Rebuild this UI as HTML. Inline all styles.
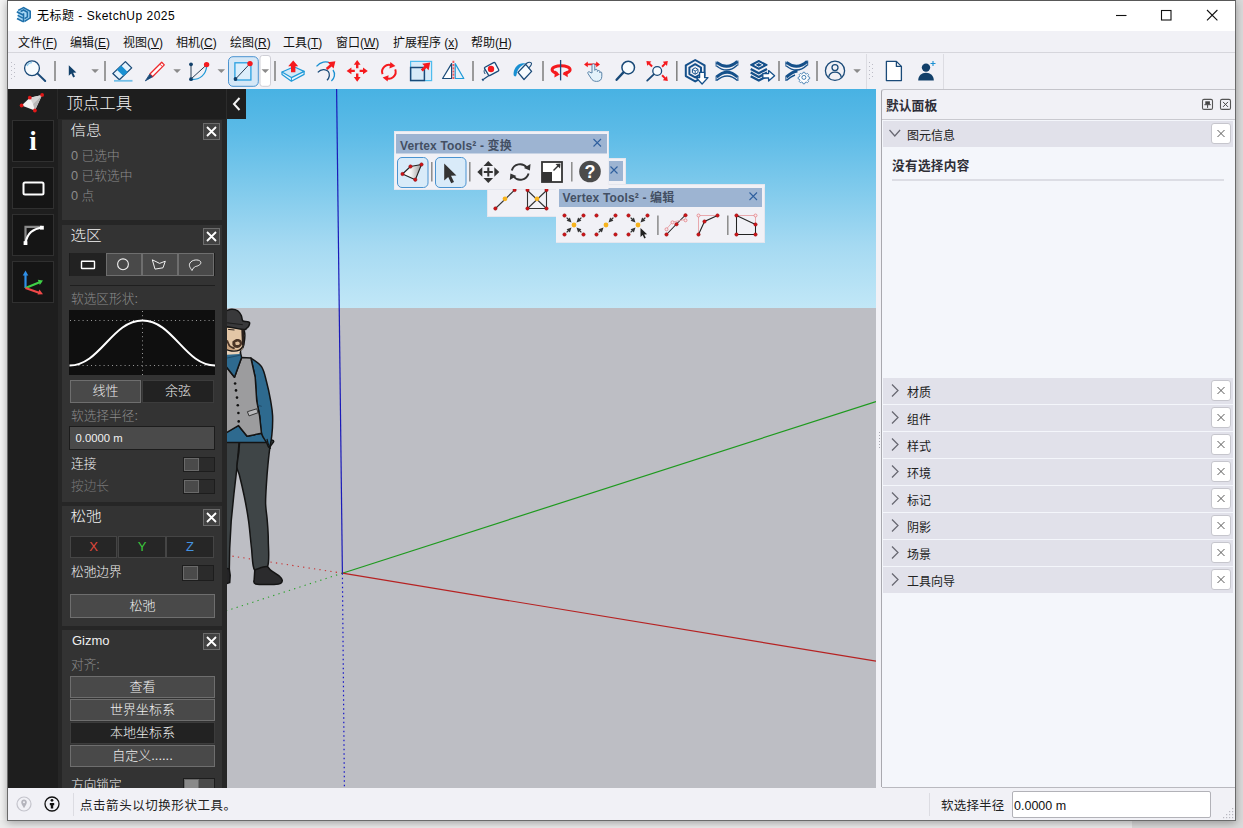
<!DOCTYPE html>
<html lang="zh-CN">
<head>
<meta charset="utf-8">
<title>无标题 - SketchUp 2025</title>
<style>
*{box-sizing:border-box;margin:0;padding:0}
html,body{width:1243px;height:828px;overflow:hidden}
body{position:relative;background:#e9e9e9;font-family:"Liberation Sans","Noto Sans CJK SC",sans-serif;font-size:12px;color:#000}
.abs{position:absolute}
svg{position:absolute;left:0;top:0;overflow:visible}
#shadowL{left:0;top:0;width:8px;height:828px;background:#f3f3f3}
#shadowR{left:1235px;top:0;width:8px;height:828px;background:#dadada}
#shadowB{left:0;top:820px;width:1243px;height:8px;background:#ececec}
#shadowB2{left:1132px;top:820px;width:111px;height:8px;background:#dadada}
#win{left:7px;top:0;width:1229px;height:821px;background:#f1f1f6;border:1px solid #6a6a6a;border-top-color:#585858;box-shadow:0 2px 8px rgba(0,0,0,.32)}
#inner{left:-8px;top:-1px;width:1243px;height:828px}
#titlebar{left:8px;top:1px;width:1227px;height:30px;background:#fff}
#title{left:37px;top:8px;font-size:12px;line-height:16px;white-space:nowrap;letter-spacing:.5px}
#menubar{left:8px;top:31px;width:1227px;height:21px;background:#f1f1f6}
.mi{top:35px;font-size:12px;line-height:16px;white-space:nowrap;color:#111}
.mi u{text-decoration:underline;text-underline-offset:1px}
#tbline{left:8px;top:52px;width:1227px;height:1px;background:#d6d6dc}
#toolbar{left:8px;top:53px;width:1227px;height:36px;background:#f1f1f6}

/* left dark panel */
#leftpanel{left:8px;top:89px;width:219px;height:699px;background:#1e1e1e;overflow:hidden}
#lpgutter{left:58px;top:119px;width:169px;height:669px;background:#262626}
#lpcollapse{left:227px;top:89px;width:19px;height:30px;background:#1e1e1e;z-index:3}
#lpicons{z-index:4}
.lbtn{left:12px;width:42px;height:42px;background:#151515;border:1px solid #303030}
.sec{left:62px;width:160px;background:#333}
.dk{font-family:"Liberation Sans","Noto Sans CJK SC",sans-serif;font-weight:300;white-space:nowrap}
.sectitle{left:70.500px;font-size:15.600px;line-height:20px;color:#f4f4f4;font-weight:300;transform:scaleY(.9);transform-origin:50% 55%}
.secx{left:202.500px;width:17px;height:17px;background:#424242;border:1px solid #6c6c6c}
.dim{color:#8c8c8c}
.lbl{left:71px;font-size:12.700px;line-height:16px;font-weight:300}
.dbtn{font-size:13px;line-height:16px;color:#f0f0f0;text-align:center;font-weight:300}
.btnA{background:#494949;border:1px solid #6e6e6e}
.btnB{background:#222;border:1px solid #3c3c3c}
.tog{width:32px;height:15.500px;background:#2b2b2b;border:1px solid #1d1d1d}
.tog i{position:absolute;left:0;top:0;width:15px;height:13.500px;background:#4a4a4a;border:1px solid #6a6a6a;display:block}

/* right panel */
#rp{left:881px;top:89px;width:354px;height:698px;background:#f1f1f6;border:1px solid #a9a9af;border-top-color:#c4c4ca;border-right:none;border-radius:3px 0 0 0}
#rphead{left:886px;top:97px;font-size:12.8px;font-weight:bold;line-height:17px;color:#2e2e38}
.row{left:883px;width:350px;height:26px;background:#e1e1ea}
.rowt{left:907px;font-size:12px;line-height:16px;color:#222}
.rowx{left:1210.500px;width:20px;height:20.500px;background:#fff;border:1px solid #c6c6cd;border-radius:3px}

/* floating toolbars */
.ft{background:#f1f1f6;border:1px solid #e4e6ee}
.fthead{background:#9db4d2}
.fttitle{font-weight:bold;font-size:12px;line-height:16px;color:#434f63;white-space:nowrap;letter-spacing:.15px}

#statusbar{left:8px;top:788px;width:1227px;height:32px;background:#f1f1f6}
</style>
</head>
<body>
<div id="shadowL" class="abs"></div>
<div id="shadowR" class="abs"></div>
<div id="shadowB" class="abs"></div>
<div id="shadowB2" class="abs"></div>
<div id="win" class="abs"><div id="inner" class="abs">

<div id="titlebar" class="abs"></div>
<div id="title" class="abs">无标题 - SketchUp 2025</div>

<div id="menubar" class="abs"></div>
<div class="abs mi" style="left:18px">文件(<u>F</u>)</div>
<div class="abs mi" style="left:70px">编辑(<u>E</u>)</div>
<div class="abs mi" style="left:123px">视图(<u>V</u>)</div>
<div class="abs mi" style="left:176px">相机(<u>C</u>)</div>
<div class="abs mi" style="left:230px">绘图(<u>R</u>)</div>
<div class="abs mi" style="left:283px">工具(<u>T</u>)</div>
<div class="abs mi" style="left:336px">窗口(<u>W</u>)</div>
<div class="abs mi" style="left:393px">扩展程序 (<u>x</u>)</div>
<div class="abs mi" style="left:471px">帮助(<u>H</u>)</div>
<div id="tbline" class="abs"></div>
<div id="toolbar" class="abs"></div>
<svg id="tbicons" width="1243" height="100" viewBox="0 0 1243 100">
<defs>
<g id="sep"><line x1="0" y1="61" x2="0" y2="81" stroke="#858585" stroke-width="1.6"/></g>
<g id="dd"><path d="M0 0h7.6l-3.8 3.9z" fill="#8a8a8a"/></g>
</defs>
<!-- SketchUp logo -->
<g>
<path d="M17.600 10.400l6-3.200 7 3.800v7.200l-6.800 4.200-6.600-3.600 1-1.600-1.200-1.600 1.200-1.400-1-1.800z" fill="#a9d8f5"/>
<g fill="none" stroke="#1f6fa9" stroke-width="1.600" stroke-linejoin="miter">
<path d="M18.200 10.400l5.400-2.800 6.600 3.700v6.600l-5.600 3.500"/>
<path d="M20.600 11.500l3-1.500 3.800 2.200v4.600l-2.800 1.800"/>
<path d="M23.500 13.200v9"/>
<path d="M16.800 11.700l6.200 3.300"/>
<path d="M17.800 15.400l5 2.700"/>
<path d="M17 18.500l6 3.100"/>
</g>
</g>
<!-- window controls -->
<path d="M1116 15.5h10.5" stroke="#111" stroke-width="1.1" fill="none"/>
<rect x="1161.5" y="10.5" width="9.5" height="9.5" fill="none" stroke="#111" stroke-width="1.1"/>
<path d="M1207 10l10.4 10.4M1217.4 10l-10.4 10.4" stroke="#111" stroke-width="1.1" fill="none"/>

<!-- gripper 1 -->
<g fill="#bcbcc6">
<rect x="11" y="62" width="1" height="1"/><rect x="11" y="66" width="1" height="1"/><rect x="11" y="70" width="1" height="1"/><rect x="11" y="74" width="1" height="1"/><rect x="11" y="78" width="1" height="1"/>
<rect x="14" y="64" width="1" height="1"/><rect x="14" y="68" width="1" height="1"/><rect x="14" y="72" width="1" height="1"/><rect x="14" y="76" width="1" height="1"/>
</g>
<!-- search -->
<circle cx="32" cy="68.2" r="7.4" fill="#f7fbfe" stroke="#1a4a78" stroke-width="1.3"/>
<path d="M27 66a5.4 5.4 0 0 1 5-3.4" stroke="#8fcbee" stroke-width="1.4" fill="none"/>
<path d="M37.6 73.6l7.6 7.4" stroke="#1a4a78" stroke-width="2" stroke-linecap="round"/>
<use href="#sep" x="55"/>
<!-- select arrow -->
<path d="M68.8 65.2v10.6l2.5-2.3 1.9 4 1.8-.9-1.9-3.9 3.3-.2z" fill="#12406a"/>
<use href="#dd" x="91.3" y="69.2"/>
<use href="#sep" x="105"/>
<!-- eraser -->
<path d="M125.400 61.600l6.300 6.300-12.300 11.800-6.600-6.100z" fill="#e6f3fc" stroke="#1a4a78" stroke-width="1.300" stroke-linejoin="round"/>
<path d="M121.200 65.600l6.500 6.300-4.300 4.100-6.600-6.200z" fill="#1a90d2"/>
<path d="M114 80.800h18.500" stroke="#72bee7" stroke-width="1.800"/>
<!-- pencil -->
<path d="M161.700 62.300l2.600 2.600-11.800 11.800-2.600-2.700z" fill="#fff" stroke="#ee2a2e" stroke-width="1.300" stroke-linejoin="round"/>
<path d="M159.900 64.200l2.600 2.600" stroke="#ee2a2e" stroke-width="1"/>
<path d="M149.700 74.200l2.600 2.700-7 4z" fill="#1a4a78" stroke="#1a4a78" stroke-width=".8" stroke-linejoin="round"/>
<use href="#dd" x="173.300" y="69.200"/>
<!-- arc -->
<path d="M191 64.500v14.500" stroke="#2a3f55" stroke-width="1"/>
<path d="M191 79l15.400-14" stroke="#2a3f55" stroke-width="1"/>
<path d="M191.500 79.500c8.500.300 14.500-4.800 15.200-13.500" stroke="#1f9ad8" stroke-width="1.300" fill="none"/>
<circle cx="191" cy="64.300" r="1.900" fill="#12406a"/><circle cx="191" cy="79.200" r="1.900" fill="#12406a"/>
<circle cx="206.600" cy="64.600" r="2.700" fill="#f51a1e"/>
<use href="#dd" x="217.500" y="69.200"/>
<!-- rectangle (selected) -->
<rect x="228.500" y="56.700" width="29.800" height="29.600" rx="4.500" fill="#d5e7f6" stroke="#4a93d0" stroke-width="1"/>
<rect x="234.900" y="62.800" width="16" height="17.200" fill="#dceefb" stroke="#29a0e0" stroke-width="1.300"/>
<path d="M235.600 79l14.400-15.400" stroke="#2a3f55" stroke-width="1"/>
<circle cx="235.500" cy="79" r="1.900" fill="#12406a"/><circle cx="250" cy="63.600" r="2.700" fill="#f51a1e"/>
<rect x="260" y="55.500" width="10.500" height="30.800" rx="2.500" fill="#fff" stroke="#cfcfd6" stroke-width="1"/>
<use href="#dd" x="261.500" y="69.200"/>
<use href="#sep" x="275"/>
<!-- push/pull -->
<path d="M282 72v2.600l9.400 6.600 12.700-6.800v-3z" fill="#e8f4fc" stroke="#1f9ad8" stroke-width="1.200" stroke-linejoin="round"/>
<path d="M282 72l12-5.200 10.100 4.600-12.700 6.200z" fill="#d2e9f8" stroke="#1f9ad8" stroke-width="1.200" stroke-linejoin="round"/>
<path d="M291.400 77.600v3.600" stroke="#1f9ad8" stroke-width="1"/>
<path d="M293.200 60.600l5 5.600h-2.800v6h-4.400v-6h-2.800z" fill="#f51a1e"/>
<!-- follow me -->
<path d="M316.5 66.4c4-4.6 9.6-5.6 13.6-3.4" stroke="#1a90d2" stroke-width="1.3" fill="none"/>
<path d="M333 70c2.6 3.6 1.6 8.4-1.6 11" stroke="#1a90d2" stroke-width="1.3" fill="none"/>
<path d="M317.8 72.4c3.4-3.6 8-3.6 10.4-1 2 2.600 1.400 6.400-1.200 8.800" stroke="#1a4a78" stroke-width="1.3" fill="none"/>
<path d="M335.4 61.200l-1.800 7.400-2-2.200-4 3.600-1.800-2 4-3.600-2-2.100z" fill="#f51a1e"/>
<!-- move -->
<g fill="#f51a1e">
<path d="M357.200 60l3.400 4.800h-2.200v3.400h-2.400v-3.400h-2.200z"/>
<path d="M357.200 81.800l3.400-4.800h-2.200v-3.400h-2.400v3.400h-2.200z"/>
<path d="M346.600 70.900l4.800-3.400v2.200h3.400v2.400h-3.400v2.200z"/>
<path d="M367.800 70.900l-4.800-3.400v2.200h-3.400v2.400h3.400v2.200z"/>
</g>
<!-- rotate -->
<g fill="none" stroke="#f51a1e" stroke-width="2">
<path d="M382.600 74.200a6.800 6.800 0 0 1 9.400-8.600"/>
<path d="M395.200 69.400a6.800 6.800 0 0 1-9.600 8.400"/>
</g>
<path d="M390.400 62l5 4-6 2.400z" fill="#f51a1e"/>
<path d="M387.600 81.600l-5-4.200 6-2.200z" fill="#f51a1e"/>
<!-- scale -->
<rect x="410.600" y="61.400" width="21" height="19.200" fill="#d7ebf9" stroke="#4fbcee" stroke-width="1.200"/>
<path d="M410.600 67.400h13.800v13.200h-13.800z" fill="none" stroke="#1a4a78" stroke-width="1.500"/>
<path d="M430.200 62.400l-1.600 7.800-2.200-2.200-3.600 3.600-2-2 3.600-3.600-2.200-2.200z" fill="#f51a1e"/>
<!-- flip -->
<path d="M451.600 63.600v14.900h-9z" fill="#fff" stroke="#1a4a78" stroke-width="1.200" stroke-linejoin="round"/>
<path d="M455.200 63.600v14.900h8.600z" fill="#e4f2fb" stroke="#1f9ad8" stroke-width="1.200" stroke-linejoin="round"/>
<path d="M453.400 60.800v19" stroke="#ee5a5e" stroke-width="1.900" stroke-dasharray="2.200 1"/>
<use href="#sep" x="473"/>
<!-- tape measure -->
<path d="M485 67.200l8.600-4.600q1-.500 1.600.500l3.400 6.400q.500 1-.500 1.600l-8 4.200q-1 .500-1.700-.400l-3.800-6.200q-.500-1 .400-1.500z" fill="#f7fbfe" stroke="#1a4a78" stroke-width="1.300" stroke-linejoin="round"/>
<circle cx="491" cy="69" r="3.200" fill="#f51a1e"/>
<path d="M484.600 69.600c-.800 1.400-.600 3 .600 4.400" fill="none" stroke="#1a4a78" stroke-width="1"/>
<path d="M489 75.400l-6.200 4.400M482 78.800l1.400 2" fill="none" stroke="#1a4a78" stroke-width="1.200"/>
<!-- paint bucket -->
<path d="M518 72.400l7.700-8.100 5.900 7.100-7.600 8.100z" fill="#f7fbfe" stroke="#1a4a78" stroke-width="1.300" stroke-linejoin="round"/>
<path d="M525 65c1.600-2.400 4.400-3.400 6-2.400 1.400 1-.200 3.800-2.600 5.400" fill="none" stroke="#1a4a78" stroke-width="1.100"/>
<path d="M525.400 63.600c-5.400-1.800-10.800 2.600-11.800 9.200-.300 2.200.300 3.600 1.500 3.600 1 0 1.400-1 1.700-2.600.800-4.400 3.800-8 8.600-10.200z" fill="#1a90d2"/>
<use href="#sep" x="543"/>
<!-- orbit -->
<ellipse cx="561.100" cy="69.800" rx="9" ry="4" fill="none" stroke="#f51a1e" stroke-width="3"/>
<rect x="557.600" y="71" width="6" height="6" fill="#f1f1f6"/>
<path d="M555 70.600l4.800 4-5.400 2.800z" fill="#f51a1e"/>
<path d="M567.400 70.400l-4.800 3.600 5.200 3.200z" fill="#f51a1e"/>
<path d="M560.600 60v20.400" stroke="#1a4a78" stroke-width="1.300"/>
<!-- pan -->
<path d="M584 64.400l3.800-2.800v1.900h8.400v-1.900l3.800 2.800-3.800 2.800v-1.900h-8.400v1.900z" fill="#f51a1e"/>
<path d="M592 73v-7.600c0-2 2.800-2 2.800 0v5c.2-1.500 2.600-1.500 2.600.1v1c.2-1.400 2.400-1.400 2.400.1v1.200c.2-1.200 2-1.100 2 .2v3.400c0 3.400-2 5-5.200 5-2.800 0-4.400-1.200-5.600-3.200l-3-4.600c-.9-1.500 1-2.700 2-1.300z" fill="#e4f2fb" stroke="#5b83a8" stroke-width="1"/>
<!-- zoom -->
<circle cx="628.200" cy="67.600" r="6.300" fill="#f7fbfe" stroke="#1a4a78" stroke-width="1.500"/>
<path d="M623.400 72.400l-6.800 7.400" stroke="#1a4a78" stroke-width="2.400" stroke-linecap="round"/>
<!-- zoom extents -->
<circle cx="657.200" cy="71" r="4.400" fill="#f7fbfe" stroke="#1a4a78" stroke-width="1.300"/>
<path d="M653.800 74.400l-6.600 6.200" stroke="#1a4a78" stroke-width="1.800" stroke-linecap="round"/>
<g fill="#f51a1e">
<path d="M646.400 61l5 .6-1.400 1.400 2.800 2.800-1.400 1.400-2.800-2.800-1.400 1.400z"/>
<path d="M667.800 61l-.8 5-1.400-1.400-2.800 2.800-1.400-1.400 2.800-2.800-1.400-1.400z"/>
<path d="M667.800 81l-5-.8 1.400-1.400-2.800-2.800 1.400-1.400 2.800 2.800 1.400-1.400z"/>
</g>
<use href="#sep" x="676.800"/>
<!-- 3d warehouse -->
<g fill="none" stroke="#15508a" stroke-width="2" stroke-linejoin="round">
<path d="M695.200 60l9.400 5.300v10.800l-9.400 5.300-9.400-5.300v-10.800z"/>
<path d="M695.200 64.200l5.800 3.300v6.600l-5.800 3.300-5.800-3.300v-6.600z"/>
</g>
<path d="M695.200 67.800l2.800 1.600v3.200l-2.800 1.600-2.800-1.600v-3.200z" fill="#fff" stroke="#15508a" stroke-width="1"/>
<path d="M692.400 69.400l2.800 1.600 2.800-1.600M695.200 71v3.200" fill="none" stroke="#15508a" stroke-width=".9"/>
<path d="M699.600 72.400h5v5.200h3.400l-5.900 6.400-5.900-6.400h3.400z" fill="#fff" stroke="#15508a" stroke-width="1.300" stroke-linejoin="round"/>
<!-- extension warehouse -->
<g fill="none" stroke="#15508a">
<path d="M716.600 62.400Q727.300 70.700 737.400 61.400" stroke-width="3"/>
<path d="M716.600 66Q727.300 74.600 737.400 65" stroke-width="1.400"/>
<path d="M716.600 77Q727.300 67.600 737.400 77" stroke-width="3"/>
<path d="M716.600 80.400Q727.300 71.400 737.400 80.400" stroke-width="1.400"/>
<path d="M716.100 61.500v5M737.900 60.500v5M716.100 76v5M737.900 76v5" stroke-width="1"/>
</g>
<!-- send to layout / stack -->
<path d="M750.700 64.900l8.100-4.300 8.200 4.300-8.200 4.300z" fill="#15508a" stroke="#15508a" stroke-width="1.200" stroke-linejoin="round"/>
<path d="M754.600 64.900l4.200-2.200 4.300 2.200-4.300 2.200z" fill="none" stroke="#f1f1f6" stroke-width="1"/>
<g fill="none" stroke="#15508a" stroke-width="2.300" stroke-linejoin="round">
<path d="M750.700 69l8.100 4.300 8.200-4.300"/>
<path d="M750.700 72.600l8.100 4.300 8.200-4.300"/>
<path d="M750.700 76.200l8.100 4.300 8.200-4.300"/>
</g>
<path d="M762.800 73.600h5.800v-3l6 5.200-6 5.200v-3h-5.800z" fill="#fff" stroke="#15508a" stroke-width="1.300" stroke-linejoin="round"/>
<use href="#sep" x="779"/>
<!-- extension manager -->
<g fill="none" stroke="#15508a">
<path d="M786.400 62.400Q797.100 70.700 807.200 61.400" stroke-width="3"/>
<path d="M786.400 66Q797.100 74.600 807.200 65" stroke-width="1.400"/>
<path d="M786.400 77Q793 71.200 797.500 71" stroke-width="3"/>
<path d="M786.400 80.400Q791 76.400 795 75" stroke-width="1.400"/>
<path d="M785.900 61.500v5M807.700 60.500v5M785.900 76v5" stroke-width="1"/>
</g>
<g transform="translate(803.900 77.400) scale(.8)">
<circle r="7.400" fill="#f1f1f6"/>
<path d="M-1-6.400h2l.5 1.600 1.400.6 1.500-.8 1.400 1.400-.8 1.500.6 1.400 1.600.5v2l-1.600.5-.6 1.400.8 1.500-1.400 1.400-1.500-.8-1.400.6-.5 1.600h-2l-.5-1.600-1.400-.6-1.500.8-1.400-1.400.8-1.500-.6-1.400-1.600-.5v-2l1.600-.5.6-1.400-.8-1.500 1.400-1.400 1.500.8 1.400-.6z" fill="#fff" stroke="#2b6ca6" stroke-width="1"/>
<circle r="2.500" fill="#fff" stroke="#2b6ca6" stroke-width="1.100"/>
</g>
<use href="#sep" x="817"/>
<!-- user -->
<circle cx="835" cy="70.800" r="9.600" fill="none" stroke="#1a4a78" stroke-width="1.300"/>
<circle cx="835" cy="67.600" r="3" fill="none" stroke="#1a4a78" stroke-width="1.300"/>
<path d="M828.600 77.600c.6-3.600 3-5.400 6.400-5.400s5.800 1.800 6.400 5.400" fill="none" stroke="#1a4a78" stroke-width="1.300"/>
<use href="#dd" x="853.300" y="69.200"/>
<!-- toolbar 2 -->
<path d="M866.500 54v35" stroke="#dcdce2" stroke-width="1"/>
<path d="M943.500 54v35" stroke="#dcdce2" stroke-width="1"/>
<g fill="#bcbcc6">
<rect x="869" y="62" width="1" height="1"/><rect x="869" y="66" width="1" height="1"/><rect x="869" y="70" width="1" height="1"/><rect x="869" y="74" width="1" height="1"/><rect x="869" y="78" width="1" height="1"/>
<rect x="872" y="64" width="1" height="1"/><rect x="872" y="68" width="1" height="1"/><rect x="872" y="72" width="1" height="1"/><rect x="872" y="76" width="1" height="1"/>
</g>
<path d="M886.400 61.400h10l5 5v14.200h-15z" fill="#fff" stroke="#1a4a78" stroke-width="1.300" stroke-linejoin="round"/>
<path d="M896.400 61.400v5h5" fill="none" stroke="#1a4a78" stroke-width="1.300" stroke-linejoin="round"/>
<circle cx="926" cy="67.600" r="4.200" fill="#12406a"/>
<path d="M918.200 80.600c0-5 3.400-7.800 7.800-7.800s7.800 2.800 7.800 7.800z" fill="#12406a"/>
<path d="M933 61v5M930.500 63.500h5" stroke="#1a90d2" stroke-width="1.100"/>
</svg>
<div id="leftpanel" class="abs"></div>
<div id="lpgutter" class="abs"></div>
<div id="lpcollapse" class="abs"></div>
<div class="abs" style="left:57px;top:89px;width:1px;height:30px;background:#2a2a2a"></div>
<div class="abs" style="left:226px;top:89px;width:1px;height:30px;background:#2c2c2c"></div>
<div class="abs dk" style="left:66.500px;top:92px;font-size:16.400px;line-height:22px;color:#f4f4f4;font-weight:300">顶点工具</div>

<div class="abs lbtn" style="top:120px"></div>
<div class="abs lbtn" style="top:167px"></div>
<div class="abs lbtn" style="top:214px"></div>
<div class="abs lbtn" style="top:261px"></div>
<div class="abs" style="left:12px;top:120px;width:42px;height:42px;text-align:center;font-family:'Liberation Serif',serif;font-weight:bold;font-size:27px;line-height:42px;color:#fff">i</div>

<!-- section: info -->
<div class="abs sec" style="top:120px;height:100px"></div>
<div class="abs dk sectitle" style="top:120px">信息</div>
<div class="abs secx" style="top:123px"></div>
<div class="abs dk lbl dim" style="top:148px">0 已选中</div>
<div class="abs dk lbl dim" style="top:168px">0 已软选中</div>
<div class="abs dk lbl dim" style="top:188px">0 点</div>

<!-- section: selection -->
<div class="abs sec" style="top:225px;height:277px"></div>
<div class="abs dk sectitle" style="top:225px">选区</div>
<div class="abs secx" style="top:228px"></div>
<div class="abs" style="left:69px;top:252.500px;width:145.500px;height:23.500px;background:#1c1c1c"></div>
<div class="abs btnB" style="left:69.500px;top:253px;width:36px;height:22.500px;border-color:#222"></div>
<div class="abs btnA" style="left:106px;top:253px;width:35.500px;height:22.500px"></div>
<div class="abs btnA" style="left:142px;top:253px;width:35.500px;height:22.500px"></div>
<div class="abs btnA" style="left:178px;top:253px;width:36px;height:22.500px"></div>
<div class="abs" style="left:70px;top:285px;width:145px;height:1px;background:#1f1f1f"></div>
<div class="abs dk lbl dim" style="top:291px">软选区形状:</div>
<div class="abs" style="left:69px;top:310px;width:146px;height:65px;background:#0f0f0f"></div>
<div class="abs dk dbtn btnA" style="left:70px;top:380px;width:71px;height:23px;padding-top:2px">线性</div>
<div class="abs dk dbtn btnB" style="left:142px;top:380px;width:72px;height:23px;padding-top:2px">余弦</div>
<div class="abs dk lbl dim" style="top:408px">软选择半径:</div>
<div class="abs" style="left:69px;top:426px;width:146px;height:24px;background:#4a4a4a;border:1px solid #1c1c1c"></div>
<div class="abs dk" style="left:75.500px;top:430px;font-size:11.300px;line-height:16px;color:#f0f0f0;font-weight:400">0.0000 m</div>
<div class="abs dk lbl" style="top:456px;color:#f2f2f2">连接</div>
<div class="abs tog" style="left:183px;top:456.500px"><i></i></div>
<div class="abs dk lbl" style="top:478px;color:#777">按边长</div>
<div class="abs tog" style="left:183px;top:478.500px"><i></i></div>

<!-- section: relax -->
<div class="abs sec" style="top:506px;height:120px"></div>
<div class="abs dk sectitle" style="top:506px">松弛</div>
<div class="abs secx" style="top:509px"></div>
<div class="abs dk dbtn btnB" style="left:70px;top:536px;width:47px;height:22px;padding-top:2px;color:#e0483c;background:#262626;border-color:#454545">X</div>
<div class="abs dk dbtn btnB" style="left:118px;top:536px;width:48px;height:22px;padding-top:2px;color:#3cc83c;background:#262626;border-color:#454545">Y</div>
<div class="abs dk dbtn btnB" style="left:166px;top:536px;width:48px;height:22px;padding-top:2px;color:#4492e0;background:#262626;border-color:#454545">Z</div>
<div class="abs dk lbl" style="top:564px;color:#f2f2f2">松弛边界</div>
<div class="abs tog" style="left:182px;top:565px"><i></i></div>
<div class="abs dk dbtn btnA" style="left:70px;top:594px;width:145px;height:24px;padding-top:3px">松弛</div>

<!-- section: gizmo -->
<div class="abs sec" style="top:630px;height:158px"></div>
<div class="abs dk" style="left:72px;top:632px;font-size:13px;line-height:18px;color:#f0f0f0;font-weight:400">Gizmo</div>
<div class="abs secx" style="top:633px"></div>
<div class="abs dk lbl dim" style="top:657px">对齐:</div>
<div class="abs dk dbtn btnA" style="left:70px;top:676px;width:145px;height:22px;padding-top:2px">查看</div>
<div class="abs dk dbtn btnA" style="left:70px;top:699px;width:145px;height:22px;padding-top:2px">世界坐标系</div>
<div class="abs dk dbtn btnB" style="left:70px;top:722px;width:145px;height:22px;padding-top:2px">本地坐标系</div>
<div class="abs dk dbtn btnA" style="left:70px;top:745px;width:145px;height:22px;padding-top:2px">自定义......</div>
<div class="abs dk lbl" style="top:777px;color:#f2f2f2">方向锁定</div>
<div class="abs tog" style="left:183px;top:778px;background:#4a4a4a"><i style="background:#8a8a8a"></i></div>

<svg id="lpicons" width="260" height="828" viewBox="0 0 260 828">
<!-- vertex tools logo -->
<path d="M21.600 105.500l8.200-7.800 12.300-2.800-7.200 15.600z" fill="#f2f2f2"/>
<path d="M29.800 97.700l3.200 6.300 9.100-9.100z" fill="#d4d4d4"/>
<path d="M33 104l1.900 6.500 7.200-15.600z" fill="#b8b8b8"/>
<g fill="#e01818"><circle cx="21.600" cy="105.500" r="1.900"/><circle cx="29.800" cy="97.700" r="1.900"/><circle cx="42.100" cy="94.900" r="1.900"/><circle cx="34.900" cy="110.500" r="1.900"/></g>
<!-- collapse chevron -->
<path d="M239.500 98l-5.500 6 5.500 6" fill="none" stroke="#f4f4f4" stroke-width="2"/>
<!-- rect icon -->
<rect x="23.500" y="182.500" width="20" height="12" rx="1.500" fill="none" stroke="#fff" stroke-width="2"/>
<!-- bezier icon -->
<path d="M25.500 243v-16.200h16.500" stroke="#8a8a8a" stroke-width="2.200" fill="none"/>
<path d="M25.500 243c.8-4.500 2.500-8.300 5.500-11 3-2.400 6.500-3.800 11-4.500" fill="none" stroke="#fff" stroke-width="2.200"/>
<rect x="40" y="225.800" width="3.800" height="3.800" fill="#fff"/><rect x="23.600" y="241.200" width="3.800" height="3.800" fill="#fff"/>
<!-- axes icon -->
<path d="M25.500 288v-14" stroke="#2f8fe8" stroke-width="2.200"/><path d="M25.500 270.500l2.800 5h-5.600z" fill="#2f8fe8"/>
<path d="M25.500 288l13.500-5.600" stroke="#3ed046" stroke-width="2.200"/><path d="M43 280.600l-3.200 4.400-2-5.200z" fill="#3ed046"/>
<path d="M25.500 288l13.500 4.800" stroke="#f04848" stroke-width="2.200"/><path d="M43 294.200l-5.400.4 1.800-5.200z" fill="#f04848"/>
<!-- close x -->
<g stroke="#fff" stroke-width="1.800" fill="none">
<path d="M207 127l9 9M216 127l-9 9"/>
<path d="M207 232l9 9M216 232l-9 9"/>
<path d="M207 513l9 9M216 513l-9 9"/>
<path d="M207 637l9 9M216 637l-9 9"/>
</g>
<!-- selection shape icons -->
<rect x="81.500" y="261.300" width="13" height="7.200" rx=".500" fill="none" stroke="#fff" stroke-width="1.400"/>
<circle cx="123" cy="264.300" r="5.400" fill="none" stroke="#f0f0f0" stroke-width="1.100"/>
<path d="M152.300 259.800l2.700 9.300 8-1.300 2.300-6.600-5.700 2.200z" fill="none" stroke="#f0f0f0" stroke-width="1" stroke-linejoin="round"/>
<path d="M192 270.500c-2-3-3.500-5-2-7.500 2-3.500 8.500-4 10.500-1.500 1.500 2.500-2 4.500-5 5-1.500.5-2.500 2-3.500 4z" fill="none" stroke="#f0f0f0" stroke-width="1" stroke-linejoin="round"/>
<!-- curve -->
<g stroke="#9a9a9a" stroke-width="1" stroke-dasharray="1 3.200" fill="none">
<path d="M70 320.500h145"/><path d="M70 365.500h145"/><path d="M142.500 311v64"/>
</g>
<path id="bell" d="M69.500 365.500C100 365.500 112 320.500 142.500 320.500S185 365.500 215 365.500" fill="none" stroke="#fff" stroke-width="2"/>
</svg>
<div id="viewport" class="abs" style="left:227px;top:89px;width:649px;height:699px;overflow:hidden;background:#bdbec4">
<div class="abs" style="left:0;top:0;width:649px;height:219px;background:linear-gradient(180deg,#48b2e3 0%,#5cbbe7 20%,#7fcaec 45%,#a6daf2 72%,#c1e7f7 100%)"></div>
<svg width="649" height="699" viewBox="227 89 649 699">
<!-- axes -->
<path d="M342.400 573.200L876 401.500" stroke="#1e9a1e" stroke-width="1.200"/>
<path d="M342.400 573.200L876 661.200" stroke="#b62222" stroke-width="1.200"/>
<path d="M336.600 89L342.400 573.200" stroke="#1a1ab8" stroke-width="1.200"/>
<path d="M342.400 573.200L227 555.300" stroke="#c83232" stroke-width="1.100" stroke-dasharray="1.300 4.200"/>
<path d="M342.400 573.200L227 610.600" stroke="#2aa02a" stroke-width="1.100" stroke-dasharray="1.300 4.200"/>
<path d="M342.400 573.200L344.400 788" stroke="#1414c8" stroke-width="1.200" stroke-dasharray="1.500 3"/>
<!-- man -->
<g stroke="#141414" stroke-width="1.500" stroke-linejoin="round" stroke-linecap="round">
<path d="M223.9 440.0 L239.3 440.0 L237.0 467.1 L233.9 494.1 L231.2 521.2 L229.7 548.2 L229.3 569.9 L223.9 569.9z" fill="#3b4143"/>
<path d="M223.9 567.9 L229.3 569.1 L230.2 575.3 L229.7 582.6 L223.9 584.5z" fill="#242426"/>
<path d="M239.7 440.0 C245.0 440.0 266.8 438.7 271.8 440.0 C276.8 441.3 270.5 443.5 269.9 447.7 C269.2 451.9 268.5 459.0 267.9 465.1 C267.3 471.2 266.8 477.9 266.4 484.4 C266.0 490.8 265.5 497.7 265.6 503.8 C265.8 509.9 266.9 515.1 267.3 521.2 C267.8 527.3 268.3 532.9 268.3 540.5 C268.3 548.1 269.8 561.6 267.5 566.6 C265.2 571.6 257.5 573.5 254.8 570.4 C252.1 567.3 252.5 556.4 251.5 548.2 C250.5 540.0 249.8 529.9 248.6 521.2 C247.4 512.5 245.8 503.7 244.2 496.0 C242.6 488.3 240.5 479.6 239.3 474.8 C238.1 470.0 237.1 471.0 237.0 467.1 C236.9 463.2 238.6 454.2 238.9 451.6z" fill="#3f4547"/>
<path d="M254.8 569.9 C256.7 569.4 263.8 566.5 266.4 566.6 C269.0 566.7 268.4 568.6 270.6 570.2 C272.8 571.8 277.6 574.6 279.5 576.2 C281.4 577.9 282.0 578.9 282.2 580.1 C282.4 581.3 282.0 582.7 280.7 583.4 C279.4 584.1 278.3 584.4 274.1 584.5 C269.9 584.6 259.0 584.9 255.7 584.0 C252.4 583.1 254.4 579.9 254.2 579.1z" fill="#2b2b2d"/>
<path d="M223.9 433.3 L238.4 425.6 L247.1 436.2 L261.5 433.3 L267.3 442.6 L223.9 442.6z" fill="#2e6a8f"/>
<path d="M250.9 358.0 C252.7 359.4 258.9 362.8 261.5 366.7 C264.1 370.6 264.9 375.6 266.4 381.2 C267.9 386.8 269.6 394.7 270.6 400.5 C271.6 406.3 272.4 410.1 272.6 415.9 C272.8 421.7 272.4 430.1 271.8 435.3 C271.2 440.5 270.2 446.1 269.3 447.2 C268.4 448.3 267.7 444.5 266.4 442.2 C265.1 439.9 262.6 437.7 261.5 433.3 C260.4 428.9 260.4 421.4 259.6 415.9 C258.8 410.4 257.4 406.9 256.7 400.5 C256.0 394.1 255.4 381.2 255.2 377.3z" fill="#2e6a8f"/>
<path d="M223.9 363.8 L234.5 377.3 L241.6 357.6 L250.9 358.0 L255.2 377.3 L256.7 400.5 L259.6 415.9 L261.5 433.3 L247.1 436.2 L238.4 425.6 L223.9 434.3z" fill="#9c9c9e"/>
<path d="M223.9 351.8 L240.3 351.8 L241.6 357.6 L234.5 377.3 L223.9 363.8z" fill="#2e6a8f"/>
<path d="M223.9 326.5 C227.1 327.0 239.9 326.3 243.2 329.4 C246.5 332.4 244.3 341.3 243.8 344.8 C243.3 348.3 241.1 349.4 240.3 350.6 C239.6 351.8 242.0 351.9 239.3 352.2 C236.6 352.5 226.5 352.2 223.9 352.2z" fill="#e3c6a6"/>
<path d="M223.9 341.5 C224.8 342.3 227.4 345.1 229.3 346.4 C231.2 347.7 233.3 348.8 235.1 349.1 C236.9 349.4 238.8 349.0 240.1 348.3 C241.4 347.6 243.1 344.4 243.2 344.8 C243.3 345.2 243.7 349.6 240.5 350.6 C237.3 351.6 226.7 350.6 223.9 350.6z" fill="#caa480" stroke="none"/>
<path d="M223.9 350.6 L240.1 350.6 L239.3 354.1 L223.9 354.9z" fill="#ead2b8" stroke="none"/>
<path d="M223.9 311.6 C225.2 311.2 229.3 309.4 231.6 309.3 C233.9 309.2 236.2 309.8 237.8 310.8 C239.4 311.8 240.5 313.8 241.3 315.5 C242.1 317.2 241.8 319.9 242.8 320.9 C243.8 321.9 246.0 321.3 247.1 321.6 C248.2 321.9 249.3 322.0 249.6 322.8 C249.8 323.6 249.2 325.3 248.6 326.3 C248.0 327.3 246.9 328.1 246.1 328.6 C245.3 329.1 247.3 329.8 243.6 329.4 C239.9 329.0 227.2 326.7 223.9 326.1z" fill="#39393b"/>
</g>
<path d="M223.9 348.7 C225.2 349.1 229.0 350.8 231.6 351.0 C234.2 351.2 237.3 351.1 239.3 350.2 C241.3 349.3 242.7 346.4 243.4 345.6" stroke="#141414" stroke-width="1.300" fill="none"/>
<path d="M227.1 322.8 L242.8 324.7" stroke="#1c1c1c" stroke-width="1" fill="none"/>
<path d="M241.3 329.4 L244.0 329.8 L244.2 344.8 L242.0 346.0z" fill="#2a211c"/>
<path d="M227.3 341.0 C227.7 341.8 228.6 344.8 229.7 346.0 C230.8 347.2 233.2 347.9 233.9 348.3" stroke="#4a3426" stroke-width="1.800" fill="none" stroke-linecap="round"/>
<path d="M232.4 341.5 C233.1 341.1 235.0 339.2 236.4 339.0 C237.8 338.8 240.0 339.3 240.9 340.2 C241.8 341.1 242.3 342.9 242.0 344.1 C241.7 345.3 240.5 346.9 239.3 347.5 C238.1 348.1 235.8 347.9 234.7 347.5 C233.5 347.1 232.8 345.2 232.4 344.8z" fill="#4a3426"/>
<path d="M235.1 342.5 C235.6 342.3 237.0 341.4 237.8 341.5 C238.6 341.6 239.5 342.3 239.7 342.9 C239.9 343.4 239.6 344.4 238.9 344.8 C238.2 345.2 236.3 345.0 235.8 345.0z" fill="#dcbc9a"/>
<path d="M228.1 329.4 L234.5 330.0" stroke="#2a211c" stroke-width="1" fill="none"/>
<path d="M227.1 358.0 L240.3 355.1" stroke="#1d4560" stroke-width=".8" fill="none"/>
<circle cx="235.1" cy="383.5" r="1.300" fill="#111"/>
<circle cx="236.0" cy="390.4" r="1.300" fill="#111"/>
<circle cx="237.0" cy="397.6" r="1.300" fill="#111"/>
<circle cx="237.8" cy="405.3" r="1.300" fill="#111"/>
<circle cx="238.4" cy="413.0" r="1.300" fill="#111"/>
<circle cx="238.7" cy="421.4" r="1.300" fill="#111"/>
<path d="M247.4 411.7 L256.7 408.8 L258.1 412.7 L249.0 415.9z" fill="#b9b9bb" stroke="#2a2a2a" stroke-width=".9" stroke-linejoin="round"/>
<path d="M257.7 405.3 L261.7 406.3" stroke="#1d4560" stroke-width=".9" fill="none"/>
<path d="M267.0 439.0 C267.2 439.8 267.7 442.3 268.3 443.9 C268.9 445.5 270.2 447.9 270.6 448.7" stroke="#141414" stroke-width="1.200" fill="none"/>
<!-- /man -->
</svg>
</div>

<!-- floating toolbars -->
<!-- toolbar 2 (behind) -->
<div class="abs ft" style="left:487px;top:158px;width:139px;height:58.5px"></div>
<div class="abs fthead" style="left:490px;top:161px;width:133px;height:19.500px"></div>
<!-- toolbar 1 -->
<div class="abs ft" style="left:394px;top:131px;width:215px;height:58.500px"></div>
<div class="abs fthead" style="left:396px;top:134px;width:210.500px;height:19.500px"></div>
<div class="abs fttitle" style="left:400px;top:137.500px">Vertex Tools² - 变换</div>
<!-- toolbar 3 -->
<div class="abs ft" style="left:556px;top:184px;width:209px;height:58.500px"></div>
<div class="abs fthead" style="left:558.500px;top:187.500px;width:203.500px;height:19.500px"></div>
<div class="abs fttitle" style="left:562.500px;top:190px">Vertex Tools² - 编辑</div>
<svg id="fticons" width="1243" height="828" viewBox="0 0 1243 828">
<defs>
<g id="fsep"><line x1="0" y1="0" x2="0" y2="19.500" stroke="#8a8a8a" stroke-width="1.500"/></g>
<g id="rd"><circle r="1.700" fill="#d01418" stroke="#8a0c10" stroke-width=".5"/></g>
<g id="rdo"><circle r="1.500" fill="#fbe9ea" stroke="#e08088" stroke-width=".8"/></g>
<g id="yd"><circle r="2.400" fill="#f6b21c"/></g>
<!-- small arrow pointing toward +x direction, tip at origin -->
<g id="arw"><path d="M0 0l-4.600-2.300v4.600z" fill="#333"/><path d="M-3.500 0h-3.400" stroke="#333" stroke-width="1.200"/></g>
</defs>

<!-- ===== toolbar 2 (behind) visible bits ===== -->
<path d="M610.500 166.500l7 7M617.500 166.500l-7 7" stroke="#2f5f9e" stroke-width="1.100" fill="none"/>
<path d="M495.400 208.500L514.200 190.400" stroke="#333" stroke-width="1.100"/>
<use href="#rd" x="495.400" y="208.500"/><use href="#rd" x="514.600" y="190"/>
<use href="#yd" x="505" y="198.800"/>
<path d="M527.500 190.500v18h19v-18M527.500 190.500l19 18M546.500 190.500l-19 18" stroke="#333" stroke-width="1.100" fill="none"/>
<use href="#rd" x="527.500" y="208.500"/><use href="#rd" x="546.500" y="208.500"/><use href="#rd" x="527.500" y="190"/><use href="#rd" x="546.500" y="190"/>
<use href="#yd" x="537" y="198.800"/>
<!-- re-cover toolbar1 & toolbar3 regions overlapping toolbar2 icons -->
<rect x="394.500" y="153.500" width="214" height="35.500" fill="#f1f1f6"/>
<rect x="556.500" y="185" width="208" height="2.500" fill="#f1f1f6"/>
<rect x="556" y="184.500" width="2.500" height="57.500" fill="#f1f1f6"/>

<!-- ===== toolbar 1 ===== -->
<path d="M593.500 139l7.500 7.500M601 139l-7.500 7.500" stroke="#2f5f9e" stroke-width="1.100" fill="none"/>
<rect x="397.500" y="157.500" width="30.500" height="30" rx="4.500" fill="#d9ebf9" stroke="#4a93d0" stroke-width="1"/>
<rect x="435.500" y="157.500" width="30.500" height="30" rx="4.500" fill="#d9ebf9" stroke="#4a93d0" stroke-width="1"/>
<use href="#fsep" x="431.800" y="162"/><use href="#fsep" x="469.800" y="162"/><use href="#fsep" x="571.800" y="162"/>
<!-- vertex logo -->
<linearGradient id="vg" x1="0" y1="0" x2="1" y2="0"><stop offset="0" stop-color="#fff"/><stop offset=".45" stop-color="#f4f4f4"/><stop offset="1" stop-color="#999"/></linearGradient>
<path d="M402.500 174l8-7.500 11-2-6.200 15.200z" fill="url(#vg)" stroke="#222" stroke-width="1.100" stroke-linejoin="round"/>
<use href="#rd" x="402.500" y="174" transform="translate(0 0)"/><use href="#rd" x="410.500" y="166.500"/><use href="#rd" x="421.500" y="164.500"/><use href="#rd" x="415.300" y="179.700"/>
<!-- select arrow -->
<path d="M444.200 163.500v17l4-3.600 3 6.400 2.800-1.300-3-6.300 5.400-.3z" fill="#333"/>
<!-- move -->
<g fill="#333">
<path d="M488.300 161l4.800 5h-9.600z"/><path d="M488.300 183l4.800-5h-9.600z"/>
<path d="M477.300 172l5-4.800v9.600z"/><path d="M499.300 172l-5-4.800v9.600z"/>
<rect x="487.300" y="167.500" width="2" height="9"/><rect x="483.800" y="171" width="9" height="2"/>
</g>
<!-- rotate -->
<g fill="none" stroke="#333" stroke-width="1.900">
<path d="M511.800 170.500a8.600 8.600 0 0 1 15-3"/>
<path d="M528.600 173.500a8.600 8.600 0 0 1-15 3"/>
</g>
<path d="M530.500 164l-.6 6.600-6-2.600z" fill="#333"/><path d="M509.800 180l.6-6.600 6 2.600z" fill="#333"/>
<!-- scale -->
<rect x="542" y="162" width="20" height="20" fill="#fff" stroke="#333" stroke-width="1.800"/>
<rect x="542" y="172" width="10" height="10" fill="#333"/>
<path d="M553.500 170.500l6-6" stroke="#333" stroke-width="1.500"/><path d="M560.500 163.500l-.4 5-4.600-4.600z" fill="#333"/>
<!-- help -->
<circle cx="590" cy="171.500" r="10.800" fill="#4b4b4b"/>
<text x="590" y="178" text-anchor="middle" font-family="Liberation Sans, sans-serif" font-weight="bold" font-size="18" fill="#fff">?</text>

<!-- ===== toolbar 3 ===== -->
<path d="M749.500 192.500l7.500 7.500M757 192.500l-7.500 7.500" stroke="#2f5f9e" stroke-width="1.100" fill="none"/>
<use href="#fsep" x="657.900" y="215.500"/><use href="#fsep" x="727.800" y="215.500"/>
<!-- icon1: merge 4 -->
<g transform="translate(574 225)">
<use href="#arw" transform="translate(-2.500 -2.500) rotate(45)"/><use href="#arw" transform="translate(2.500 -2.500) rotate(135)"/>
<use href="#arw" transform="translate(-2.500 2.500) rotate(-45)"/><use href="#arw" transform="translate(2.500 2.500) rotate(-135)"/>
<use href="#rd" x="-9.500" y="-9.500"/><use href="#rd" x="9.500" y="-9.500"/><use href="#rd" x="-9.500" y="9.500"/><use href="#rd" x="9.500" y="9.500"/>
<use href="#yd"/>
</g>
<!-- icon2: merge 2 -->
<g transform="translate(606 225)">
<use href="#arw" transform="translate(2.500 -2.500) rotate(135)"/><use href="#arw" transform="translate(-2.500 2.500) rotate(-45)"/>
<use href="#rd" x="-9.500" y="-9.500"/><use href="#rd" x="9.500" y="-9.500"/><use href="#rd" x="-9.500" y="9.500"/><use href="#rd" x="9.500" y="9.500"/>
<use href="#yd"/>
</g>
<!-- icon3: merge to cursor -->
<g transform="translate(638 225)">
<use href="#arw" transform="translate(-2.500 -2.500) rotate(45)"/><use href="#arw" transform="translate(2.500 -2.500) rotate(135)"/>
<use href="#arw" transform="translate(-2.500 2.500) rotate(-45)"/>
<use href="#rd" x="-9.500" y="-9.500"/><use href="#rd" x="9.500" y="-9.500"/><use href="#rd" x="-9.500" y="9.500"/>
<use href="#yd"/>
<path d="M2.500 3v9l2.200-1.900 1.600 3.400 1.500-.7-1.600-3.300 2.900-.2z" fill="#222"/>
</g>
<!-- icon4: make line -->
<g>
<path d="M666.500 234.500l10-10.500 9-9" stroke="#222" stroke-width="1.050" fill="none"/>
<path d="M666.500 229l6-7 12.500-2.500" stroke="#e6a0a6" stroke-width=".9" fill="none"/>
<use href="#rdo" x="666.500" y="229.300"/><use href="#rdo" x="672.500" y="222.300"/><use href="#rdo" x="685.500" y="220.300"/>
<use href="#rd" x="666.500" y="234.500"/><use href="#rd" x="676.500" y="224.300"/><use href="#rd" x="685.500" y="215.300"/>
</g>
<!-- icon5: -->
<g>
<path d="M698.500 234.500v-19h19" stroke="#e6a0a6" stroke-width=".9" fill="none"/>
<path d="M698.500 234.500l6-13 13-6" stroke="#222" stroke-width="1.050" fill="none"/>
<use href="#rdo" x="698.500" y="215.500"/>
<use href="#rd" x="698.500" y="234.500"/><use href="#rd" x="704.500" y="221.500"/><use href="#rd" x="717.500" y="215.500"/>
</g>
<!-- icon6: -->
<g>
<path d="M736.500 215.500h19v9" stroke="#e6a0a6" stroke-width=".9" fill="none"/>
<path d="M736.500 215.500v19h19v-10z" stroke="#222" stroke-width="1.050" fill="none" stroke-linejoin="round"/>
<use href="#rdo" x="755.500" y="215.500"/>
<use href="#rd" x="736.500" y="215.500"/><use href="#rd" x="736.500" y="234.500"/><use href="#rd" x="755.500" y="234.500"/><use href="#rd" x="755.500" y="224.500"/>
</g>
</svg>
<div id="rp" class="abs"></div>
<div id="rphead" class="abs">默认面板</div>
<div class="abs" style="left:882px;top:119px;width:353px;height:1px;background:#c9c9cf"></div>
<div class="abs" style="left:882px;top:120px;width:353px;height:667px;background:#f4f6fb"></div>
<div class="abs" style="left:882px;top:787px;width:353px;height:1px;background:#b9b9bf"></div>
<div class="abs row" style="top:121px"></div>
<div class="abs rowt" style="top:127.5px">图元信息</div>
<div class="abs rowx" style="top:123.0px"></div>
<div class="abs" style="left:892px;top:158px;font-size:12.600px;font-weight:bold;line-height:17px;color:#2e2e36;white-space:nowrap;letter-spacing:.35px">没有选择内容</div>
<div class="abs" style="left:892px;top:179px;width:332px;height:1.500px;background:#dcdde4"></div>
<div class="abs row" style="top:378px"></div>
<div class="abs rowt" style="top:384.5px">材质</div>
<div class="abs rowx" style="top:380.0px"></div>
<div class="abs row" style="top:405px"></div>
<div class="abs rowt" style="top:411.5px">组件</div>
<div class="abs rowx" style="top:407.0px"></div>
<div class="abs row" style="top:432px"></div>
<div class="abs rowt" style="top:438.5px">样式</div>
<div class="abs rowx" style="top:434.0px"></div>
<div class="abs row" style="top:459px"></div>
<div class="abs rowt" style="top:465.5px">环境</div>
<div class="abs rowx" style="top:461.0px"></div>
<div class="abs row" style="top:486px"></div>
<div class="abs rowt" style="top:492.5px">标记</div>
<div class="abs rowx" style="top:488.0px"></div>
<div class="abs row" style="top:513px"></div>
<div class="abs rowt" style="top:519.5px">阴影</div>
<div class="abs rowx" style="top:515.0px"></div>
<div class="abs row" style="top:540px"></div>
<div class="abs rowt" style="top:546.5px">场景</div>
<div class="abs rowx" style="top:542.0px"></div>
<div class="abs row" style="top:567px"></div>
<div class="abs rowt" style="top:573.5px">工具向导</div>
<div class="abs rowx" style="top:569.0px"></div>
<svg id="rpicons" width="1243" height="828" viewBox="0 0 1243 828">
<rect x="1202.500" y="99.400" width="10" height="10" rx="1.500" fill="none" stroke="#555" stroke-width="1.100"/>
<rect x="1205.300" y="101.300" width="4.600" height="3" fill="#444"/><path d="M1204.400 104.700h6.400M1207.600 104.700v3.200" stroke="#444" stroke-width="1" fill="none"/>
<rect x="1220.500" y="99.400" width="10" height="10" rx="1.500" fill="none" stroke="#555" stroke-width="1.100"/>
<path d="M1223 101.900l5 5M1228 101.900l-5 5" stroke="#444" stroke-width="1" fill="none"/>
<path d="M889.500 130l5.300 6 5.300-6" fill="none" stroke="#686872" stroke-width="1.250"/>
<path d="M1217.500 130.0l7 7M1224.500 130.0l-7 7" stroke="#5a5a5a" stroke-width="1" fill="none"/>
<path d="M892 384.5l6 6-6 6" fill="none" stroke="#686872" stroke-width="1.250"/>
<path d="M1217.500 387.0l7 7M1224.500 387.0l-7 7" stroke="#5a5a5a" stroke-width="1" fill="none"/>
<path d="M892 411.5l6 6-6 6" fill="none" stroke="#686872" stroke-width="1.250"/>
<path d="M1217.500 414.0l7 7M1224.500 414.0l-7 7" stroke="#5a5a5a" stroke-width="1" fill="none"/>
<path d="M892 438.5l6 6-6 6" fill="none" stroke="#686872" stroke-width="1.250"/>
<path d="M1217.500 441.0l7 7M1224.500 441.0l-7 7" stroke="#5a5a5a" stroke-width="1" fill="none"/>
<path d="M892 465.5l6 6-6 6" fill="none" stroke="#686872" stroke-width="1.250"/>
<path d="M1217.500 468.0l7 7M1224.500 468.0l-7 7" stroke="#5a5a5a" stroke-width="1" fill="none"/>
<path d="M892 492.5l6 6-6 6" fill="none" stroke="#686872" stroke-width="1.250"/>
<path d="M1217.500 495.0l7 7M1224.500 495.0l-7 7" stroke="#5a5a5a" stroke-width="1" fill="none"/>
<path d="M892 519.5l6 6-6 6" fill="none" stroke="#686872" stroke-width="1.250"/>
<path d="M1217.500 522.0l7 7M1224.500 522.0l-7 7" stroke="#5a5a5a" stroke-width="1" fill="none"/>
<path d="M892 546.5l6 6-6 6" fill="none" stroke="#686872" stroke-width="1.250"/>
<path d="M1217.500 549.0l7 7M1224.500 549.0l-7 7" stroke="#5a5a5a" stroke-width="1" fill="none"/>
<path d="M892 573.5l6 6-6 6" fill="none" stroke="#686872" stroke-width="1.250"/>
<path d="M1217.500 576.0l7 7M1224.500 576.0l-7 7" stroke="#5a5a5a" stroke-width="1" fill="none"/>
<rect x="879" y="432" width="1" height="1" fill="#a8a8b0"/>
<rect x="879" y="435" width="1" height="1" fill="#a8a8b0"/>
<rect x="879" y="438" width="1" height="1" fill="#a8a8b0"/>
<rect x="879" y="441" width="1" height="1" fill="#a8a8b0"/>
<rect x="879" y="444" width="1" height="1" fill="#a8a8b0"/>
<rect x="879" y="447" width="1" height="1" fill="#a8a8b0"/>
</svg>
<div id="statusbar" class="abs"></div>
<div class="abs" style="left:72.500px;top:793px;width:1px;height:23px;background:#dcdce2"></div>
<div class="abs" style="left:80px;top:797.500px;font-size:12.500px;line-height:17px;color:#222;letter-spacing:.55px;white-space:nowrap">点击箭头以切换形状工具。</div>
<div class="abs" style="left:929px;top:793px;width:1px;height:23px;background:#dcdce2"></div>
<div class="abs" style="left:941px;top:797.500px;font-size:12.500px;line-height:17px;color:#222;letter-spacing:.2px;white-space:nowrap">软选择半径</div>
<div class="abs" style="left:1011.500px;top:790.800px;width:199.500px;height:27px;background:#fff;border:1px solid #b2b2b8;border-radius:2px"></div>
<div class="abs" style="left:1014px;top:797.500px;font-size:12.500px;line-height:17px;color:#111;white-space:nowrap">0.0000 m</div>
<svg width="1243" height="828" viewBox="0 0 1243 828">
<circle cx="24" cy="804" r="7" fill="none" stroke="#c4c4cc" stroke-width="1.200"/>
<path d="M24 799.600c-1.700 0-2.800 1.200-2.800 2.700 0 1.800 2.800 5.800 2.800 5.800s2.800-4 2.800-5.800c0-1.500-1.100-2.700-2.800-2.700z" fill="#b4b4bc"/><circle cx="24" cy="802.300" r="1" fill="#f1f1f6"/>
<circle cx="52" cy="804" r="7" fill="none" stroke="#111" stroke-width="1.300"/>
<circle cx="52" cy="800.300" r="1.400" fill="#111"/><path d="M49.800 803h4.400v2.200h-1v3.400h-2.400v-3.400h-1z" fill="#111"/>
<rect x="1232" y="808" width="1.200" height="1.200" fill="#b8b8c0"/>
<rect x="1229" y="811" width="1.200" height="1.200" fill="#b8b8c0"/>
<rect x="1232" y="811" width="1.200" height="1.200" fill="#b8b8c0"/>
<rect x="1226" y="814" width="1.200" height="1.200" fill="#b8b8c0"/>
<rect x="1229" y="814" width="1.200" height="1.200" fill="#b8b8c0"/>
<rect x="1232" y="814" width="1.200" height="1.200" fill="#b8b8c0"/>
<rect x="1223" y="817" width="1.200" height="1.200" fill="#b8b8c0"/>
<rect x="1226" y="817" width="1.200" height="1.200" fill="#b8b8c0"/>
<rect x="1229" y="817" width="1.200" height="1.200" fill="#b8b8c0"/>
<rect x="1232" y="817" width="1.200" height="1.200" fill="#b8b8c0"/>
</svg>
</div></div>
</body>
</html>
